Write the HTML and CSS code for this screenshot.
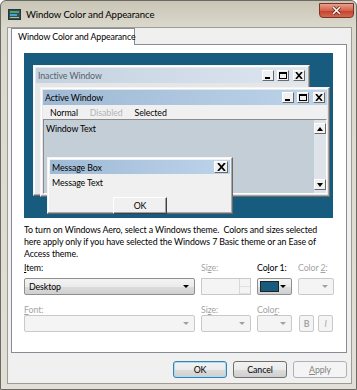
FILE: index.html
```html
<!DOCTYPE html>
<html lang="en">
<head>
    <meta charset="UTF-8">
    <title>Window Color and Appearance</title>
    <link rel="stylesheet" href="styles.css">
</head>
<body>
    <div class="window">
        <div class="titlebar">
            <svg class="title-icon" width="13" height="11" viewBox="0 0 13 11">
                <rect x="0.5" y="0.5" width="12" height="10" fill="#3a4a5a" stroke="#2a3440"/>
                <rect x="2" y="2" width="9" height="2" fill="#3fae5a"/>
                <rect x="2" y="5" width="7" height="2" fill="#4aa0d8"/>
                <rect x="2" y="8" width="9" height="1" fill="#9ad07a"/>
            </svg>
            <span class="title">Window Color and Appearance</span>
            <div class="close">
                <svg width="11" height="9" viewBox="0 0 11 9">
                    <path d="M2 1 L9 8 M9 1 L2 8" stroke="#5a1a10" stroke-width="3"/>
                    <path d="M2 1 L9 8 M9 1 L2 8" stroke="#fff" stroke-width="1.6"/>
                </svg>
            </div>
        </div>

        <div class="client">
            <div class="tabs">
                <div class="tab">Window Color and Appearance</div>
            </div>
            <div class="panel">
                <div class="preview">
                    <div class="pwin inactive">
                        <div class="caption">
                            <span>Inactive Window</span>
                            <div class="capbtns">
                                <span class="cb"><svg width="8" height="7"><rect x="1" y="5" width="5" height="2" fill="#000"/></svg></span>
                                <span class="cb"><svg width="8" height="7"><rect x="0.5" y="0.5" width="7" height="6" fill="none" stroke="#000"/><rect x="0" y="0" width="8" height="2" fill="#000"/></svg></span>
                                <span class="cb gap"><svg width="8" height="7"><path d="M1 0 L7 7 M7 0 L1 7" stroke="#000" stroke-width="1.6"/></svg></span>
                            </div>
                        </div>
                    </div>

                    <div class="pwin active">
                        <div class="caption">
                            <span>Active Window</span>
                            <div class="capbtns">
                                <span class="cb"><svg width="8" height="7"><rect x="1" y="5" width="5" height="2" fill="#000"/></svg></span>
                                <span class="cb"><svg width="8" height="7"><rect x="0.5" y="0.5" width="7" height="6" fill="none" stroke="#000"/><rect x="0" y="0" width="8" height="2" fill="#000"/></svg></span>
                                <span class="cb gap"><svg width="8" height="7"><path d="M1 0 L7 7 M7 0 L1 7" stroke="#000" stroke-width="1.6"/></svg></span>
                            </div>
                        </div>
                        <div class="menubar">
                            <span>Normal</span>
                            <span class="dis">Disabled</span>
                            <span>Selected</span>
                        </div>
                        <div class="wtext">
                            <span class="wt">Window Text</span>
                            <div class="scroll">
                                <span class="sbtn"><svg width="6" height="4"><path d="M0 4 L3 0 L6 4 Z" fill="#000"/></svg></span>
                                <span class="sbtn"><svg width="6" height="4"><path d="M0 0 L3 4 L6 0 Z" fill="#000"/></svg></span>
                            </div>
                        </div>
                    </div>

                    <div class="pwin msgbox">
                        <div class="caption">
                            <span>Message Box</span>
                            <span class="cb big"><svg width="9" height="8"><path d="M1 0 L8 8 M8 0 L1 8" stroke="#000" stroke-width="1.8"/></svg></span>
                        </div>
                        <div class="msgtext">Message Text</div>
                        <div class="msgok">OK</div>
                    </div>
                </div>

                <p class="note">To turn on Windows Aero, select a Windows theme.&nbsp; Colors and sizes selected here apply only if you have selected the Windows 7 Basic theme or an Ease of Access theme.</p>

                <div class="fields">
                    <label><u>I</u>tem:</label>
                    <label class="off">Si<u>z</u>e:</label>
                    <label>Co<u>l</u>or 1:</label>
                    <label class="off">Color <u>2</u>:</label>

                    <div class="combo">Desktop<span class="arrow"></span></div>
                    <div class="spin off"><span class="spinbtns"><span></span><span></span></span></div>
                    <div class="combo color"><span class="swatch"></span><span class="arrow"></span></div>
                    <div class="combo off"><span class="arrow"></span></div>

                    <label class="off second"><u>F</u>ont:</label>
                    <label class="off second">Si<u>z</u>e:</label>
                    <label class="off second">Colo<u>r</u>:</label>
                    <span></span>

                    <div class="combo off"><span class="arrow"></span></div>
                    <div class="combo off"><span class="arrow"></span></div>
                    <div class="combo off"><span class="arrow"></span></div>
                    <div class="style-btns">
                        <span class="sb bold">B</span>
                        <span class="sb ital">I</span>
                    </div>
                </div>
            </div>

            <div class="buttons">
                <button class="btn default">OK</button>
                <button class="btn">Cancel</button>
                <button class="btn off"><u>A</u>pply</button>
            </div>
        </div>
    </div>
</body>
</html>
```

FILE: styles.css
```css
body { margin: 0; background: #fff; font-family: Lato, "Noto Sans", sans-serif; font-size: 8.8px; letter-spacing: -0.1px; color: #000; }

.window {
    width: 357px;
    height: 390px;
    box-sizing: border-box;
    border: 1px solid #6b6a63;
    border-radius: 6px 6px 0 0;
    background: linear-gradient(#c9c5b6, #dbd8cd 26px, #e2dfd6);
    padding: 0 4px 5px 6px;
    display: flex;
    flex-direction: column;
}

.titlebar { height: 26px; display: flex; align-items: center; }
.title-icon { margin: 0 5px 0 1px; }
.title { font-size: 9.6px; color: #000; }
.close {
    margin-left: auto;
    margin-right: -2px;
    align-self: flex-start;
    margin-top: 2px;
    width: 35px;
    height: 15px;
    box-sizing: border-box;
    border: 1px solid #7c3326;
    border-radius: 0 0 4px 4px;
    background: linear-gradient(#e8a08c, #d4614a 50%, #c2402a 51%, #d06a50);
    display: flex;
    align-items: center;
    justify-content: center;
}

.client {
    flex: 1;
    background: #f0f0f0;
    border: 1px solid #9e9c93;
    padding: 0 4px 0 3px;
}

.tabs { height: 16px; }
.tab {
    display: inline-block;
    position: relative;
    z-index: 1;
    height: 17px;
    box-sizing: border-box;
    width: 124px;
    padding-left: 6px;
    border: 1px solid #898c95;
    border-bottom: none;
    background: #fff;
    line-height: 16px;
    white-space: nowrap;
}

.panel {
    height: 309px;
    box-sizing: border-box;
    background: #fff;
    border: 1px solid #898c95;
    padding: 8px 12px 0 12px;
}

/* preview of window elements */
.preview {
    position: relative;
    width: 309px;
    height: 165px;
    background: #175c7e;
    overflow: hidden;
}
.pwin {
    position: absolute;
    box-sizing: border-box;
    background: #e4e6e8;
    border: 1px solid;
    border-color: #f4f4f4 #6a6a6a #6a6a6a #f4f4f4;
    padding: 2px;
    box-shadow: inset -1px -1px 0 #a8a8a8, inset 1px 1px 0 #fff;
}
.inactive { left: 9px; top: 12px; width: 277px; height: 131px; }
.active { left: 16px; top: 34px; width: 290px; height: 110px; display: flex; flex-direction: column; }
.msgbox { left: 23px; top: 104px; width: 186px; height: 57px; background: #f0f0f0; }

.caption {
    height: 15px;
    display: flex;
    align-items: center;
    padding-left: 2px;
    padding-right: 2px;
    background: linear-gradient(to right, #9fb9d4, #bdd4ea);
}
.inactive .caption { background: linear-gradient(to right, #c4d1de, #dce6f1); color: #56626b; }
.capbtns { margin-left: auto; display: flex; }
.cb {
    width: 12px;
    height: 11px;
    box-sizing: border-box;
    background: #f0f0f0;
    border: 1px solid;
    border-color: #fff #6a6a6a #6a6a6a #fff;
    display: flex;
    align-items: center;
    justify-content: center;
    margin-left: 3px;
}
.cb.gap { margin-left: 4px; }
.cb.big { margin-left: auto; width: 14px; height: 12px; }

.menubar { height: 14px; display: flex; align-items: center; padding-left: 7px; gap: 12px; background: #f0f0f0; }
.menubar .dis { color: #b0b4b8; }

.wtext {
    flex: 1;
    display: flex;
    background: #c4ced7;
    border: 1px solid;
    border-color: #8a8a8a #fff #fff #8a8a8a;
}
.wt { flex: 1; padding: 3px 0 0 2px; }
.scroll {
    width: 12px;
    background: #dde3e8;
    display: flex;
    flex-direction: column;
    justify-content: space-between;
    padding: 3px 0;
}
.sbtn {
    height: 11px;
    box-sizing: border-box;
    background: #f0f0f0;
    border: 1px solid;
    border-color: #fff #6a6a6a #6a6a6a #fff;
    display: flex;
    align-items: center;
    justify-content: center;
}

.msgbox .caption { height: 14px; padding-left: 2px; }
.msgtext { padding: 3px 0 0 2px; height: 16px; }
.msgok {
    width: 54px;
    height: 17px;
    box-sizing: border-box;
    margin: 4px auto 0;
    border: 1px solid;
    border-color: #fff #404040 #404040 #fff;
    box-shadow: inset -1px -1px 0 #a0a0a0;
    background: #f0f0f0;
    text-align: center;
    line-height: 15px;
}

.note { margin: 6px 0 0; line-height: 12px; }

/* field grid */
.fields {
    display: grid;
    grid-template-columns: 171px 50px 35px 36px;
    grid-template-rows: 12px 17px 12px 17px;
    column-gap: 6px;
    row-gap: 4px;
    margin-top: 2px;
    line-height: 12px;
}
.fields label.second { margin-top: 5px; margin-bottom: -5px; }
.off { color: #a4a4a4; }

.combo {
    position: relative;
    box-sizing: border-box;
    height: 17px;
    border: 1px solid #8e8f8f;
    border-radius: 2px;
    background: linear-gradient(#f4f4f4, #ebebeb 50%, #dddddd 51%, #cfcfcf);
    padding-left: 4px;
    line-height: 15px;
}
.combo.off, .spin.off {
    border-color: #c9c9c9;
    background: #f4f4f4;
}
.arrow {
    position: absolute;
    right: 5px;
    top: 6px;
    width: 0;
    height: 0;
    border-left: 3px solid transparent;
    border-right: 3px solid transparent;
    border-top: 3px solid #000;
}
.combo.off .arrow { border-top-color: #a0a0a0; }
.combo.color { padding: 2px 0 0 2px; }
.swatch {
    display: block;
    width: 19px;
    height: 11px;
    box-sizing: border-box;
    background: #175c7e;
    border: 1px solid #222;
}

.spin { position: relative; box-sizing: border-box; height: 17px; border: 1px solid; }
.spinbtns {
    position: absolute;
    right: 0;
    top: 0;
    bottom: 0;
    width: 10px;
    display: flex;
    flex-direction: column;
    border-left: 1px solid #d8d8d8;
}
.spinbtns span { flex: 1; border-bottom: 1px solid #e0e0e0; }

.style-btns { display: flex; gap: 4px; padding-left: 1px; }
.sb {
    width: 15px;
    height: 17px;
    box-sizing: border-box;
    border: 1px solid #c9c9c9;
    border-radius: 2px;
    background: #f4f4f4;
    color: #a4a4a4;
    text-align: center;
    line-height: 15px;
}
.sb.bold { font-weight: bold; }
.sb.ital { font-style: italic; }

.buttons { display: flex; justify-content: flex-end; gap: 6px; margin-top: 8px; }
.btn {
    width: 54px;
    height: 17px;
    box-sizing: border-box;
    padding: 0;
    border: 1px solid #707070;
    border-radius: 3px;
    background: linear-gradient(#f2f2f2, #ebebeb 50%, #dddddd 51%, #cfcfcf);
    font-family: Lato, "Noto Sans", sans-serif;
    font-size: 8.8px;
    letter-spacing: -0.1px;
    color: #000;
}
.btn.default { border-color: #3c7fb1; box-shadow: inset 0 0 0 1px #a8dcf0; }
.btn.off { border-color: #adb2b5; background: #f4f4f4; color: #838383; }
```
